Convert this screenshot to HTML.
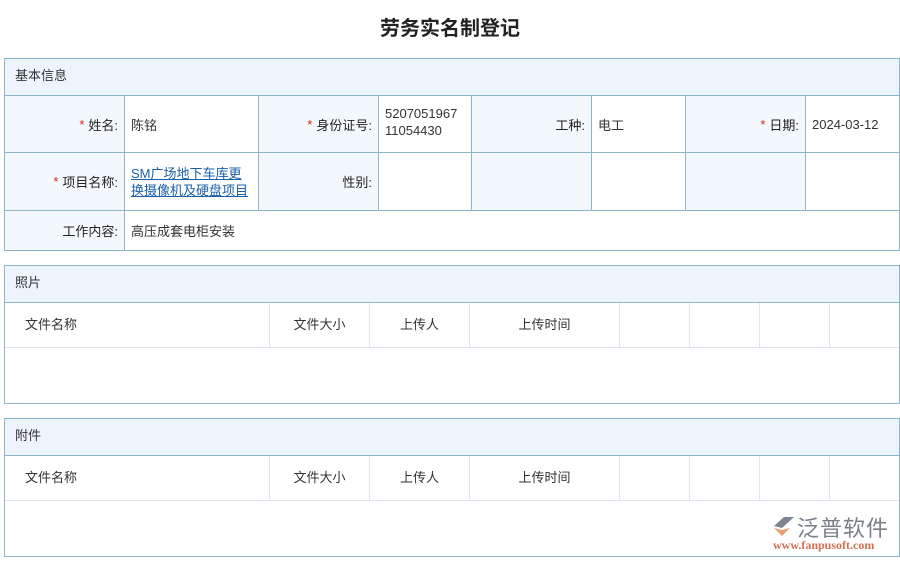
<html><head><style>
body{margin:0;width:900px;height:562px;background:#fff;font-family:"Liberation Sans","Noto Sans CJK SC",sans-serif;font-size:13px;color:#333;position:relative;overflow:hidden}
.a{position:absolute;box-sizing:border-box}
h1{position:absolute;top:12px;left:0;width:900px;text-align:center;margin:0;font-size:20px;font-weight:bold;color:#222}
.box{border:1px solid #8fb5c8}
.hd{background:#edf4fc;border-bottom:1px solid #8fb5c8;padding-left:10px;padding-bottom:5px;display:flex;align-items:center}
.c{position:absolute;box-sizing:border-box;border-right:1px solid #8fb5c8;border-bottom:1px solid #8fb5c8;display:flex;align-items:center;padding:0 6px}
.l{background:#f3f8fd;justify-content:flex-end;color:#222}
.s{color:#e02020;margin-right:4px}
.t{position:absolute;box-sizing:border-box;border-right:1px solid #dde6ee;border-bottom:1px solid #dde6ee;height:45px;display:flex;align-items:center;justify-content:center;padding-bottom:4px}
a{color:#1a5fa8;text-decoration:underline}
</style></head><body>
<h1>劳务实名制登记</h1>
<div class="a box" style="left:4px;top:58px;width:896px;height:193px">
<div class="a hd" style="left:0;top:0;width:894px;height:37px">基本信息</div>
<div class="c l" style="left:0;top:37px;width:120px;height:57px"><span class="s">*</span>姓名:</div>
<div class="c" style="left:120px;top:37px;width:134px;height:57px">陈铭</div>
<div class="c l" style="left:254px;top:37px;width:120px;height:57px"><span class="s">*</span>身份证号:</div>
<div class="c" style="left:374px;top:37px;width:93px;height:57px;line-height:17px;padding-bottom:4px">5207051967<br>11054430</div>
<div class="c l" style="left:467px;top:37px;width:120px;height:57px">工种:</div>
<div class="c" style="left:587px;top:37px;width:94px;height:57px">电工</div>
<div class="c l" style="left:681px;top:37px;width:120px;height:57px"><span class="s">*</span>日期:</div>
<div class="c" style="left:801px;top:37px;width:94px;height:57px;border-right:0">2024-03-12</div>
<div class="c l" style="left:0;top:94px;width:120px;height:58px"><span class="s">*</span>项目名称:</div>
<div class="c" style="left:120px;top:94px;width:134px;height:58px;line-height:17px"><a>SM广场地下车库更换摄像机及硬盘项目</a></div>
<div class="c l" style="left:254px;top:94px;width:120px;height:58px">性别:</div>
<div class="c" style="left:374px;top:94px;width:93px;height:58px"></div>
<div class="c l" style="left:467px;top:94px;width:120px;height:58px"></div>
<div class="c" style="left:587px;top:94px;width:94px;height:58px"></div>
<div class="c l" style="left:681px;top:94px;width:120px;height:58px"></div>
<div class="c" style="left:801px;top:94px;width:94px;height:58px;border-right:0"></div>
<div class="c l" style="left:0;top:152px;width:120px;height:39px;border-bottom:0">工作内容:</div>
<div class="c" style="left:120px;top:152px;width:775px;height:39px;border:0">高压成套电柜安装</div>
</div>
<div class="a box" style="left:4px;top:265px;width:896px;height:139px">
<div class="a hd" style="left:0;top:0;width:894px;height:37px">照片</div>
<div class="t" style="left:0;top:37px;width:265px;justify-content:flex-start;padding-left:20px">文件名称</div>
<div class="t" style="left:265px;top:37px;width:100px">文件大小</div>
<div class="t" style="left:365px;top:37px;width:100px">上传人</div>
<div class="t" style="left:465px;top:37px;width:150px">上传时间</div>
<div class="t" style="left:615px;top:37px;width:70px"></div>
<div class="t" style="left:685px;top:37px;width:70px"></div>
<div class="t" style="left:755px;top:37px;width:70px"></div>
<div class="t" style="left:825px;top:37px;width:69px;border-right:0"></div>
</div>
<div class="a box" style="left:4px;top:418px;width:896px;height:139px">
<div class="a hd" style="left:0;top:0;width:894px;height:37px">附件</div>
<div class="t" style="left:0;top:37px;width:265px;justify-content:flex-start;padding-left:20px">文件名称</div>
<div class="t" style="left:265px;top:37px;width:100px">文件大小</div>
<div class="t" style="left:365px;top:37px;width:100px">上传人</div>
<div class="t" style="left:465px;top:37px;width:150px">上传时间</div>
<div class="t" style="left:615px;top:37px;width:70px"></div>
<div class="t" style="left:685px;top:37px;width:70px"></div>
<div class="t" style="left:755px;top:37px;width:70px"></div>
<div class="t" style="left:825px;top:37px;width:69px;border-right:0"></div>
</div>
<svg class="a" style="left:770px;top:514px" width="26" height="24"><path d="M4 12 L14 3 L24 3 L12 14 Z" fill="#7d8590"/><path d="M4 14 L12 22 L20 14 L12 16 Z" fill="#e8a070"/></svg>
<div class="a" style="left:797px;top:511px;font-size:22px;color:#7a8088;letter-spacing:1px">泛普软件</div>
<div class="a" style="left:773px;top:538px;font-size:12px;color:#d07050;font-family:'Liberation Serif',serif;font-weight:bold">www.fanpusoft.com</div>
</body></html>
